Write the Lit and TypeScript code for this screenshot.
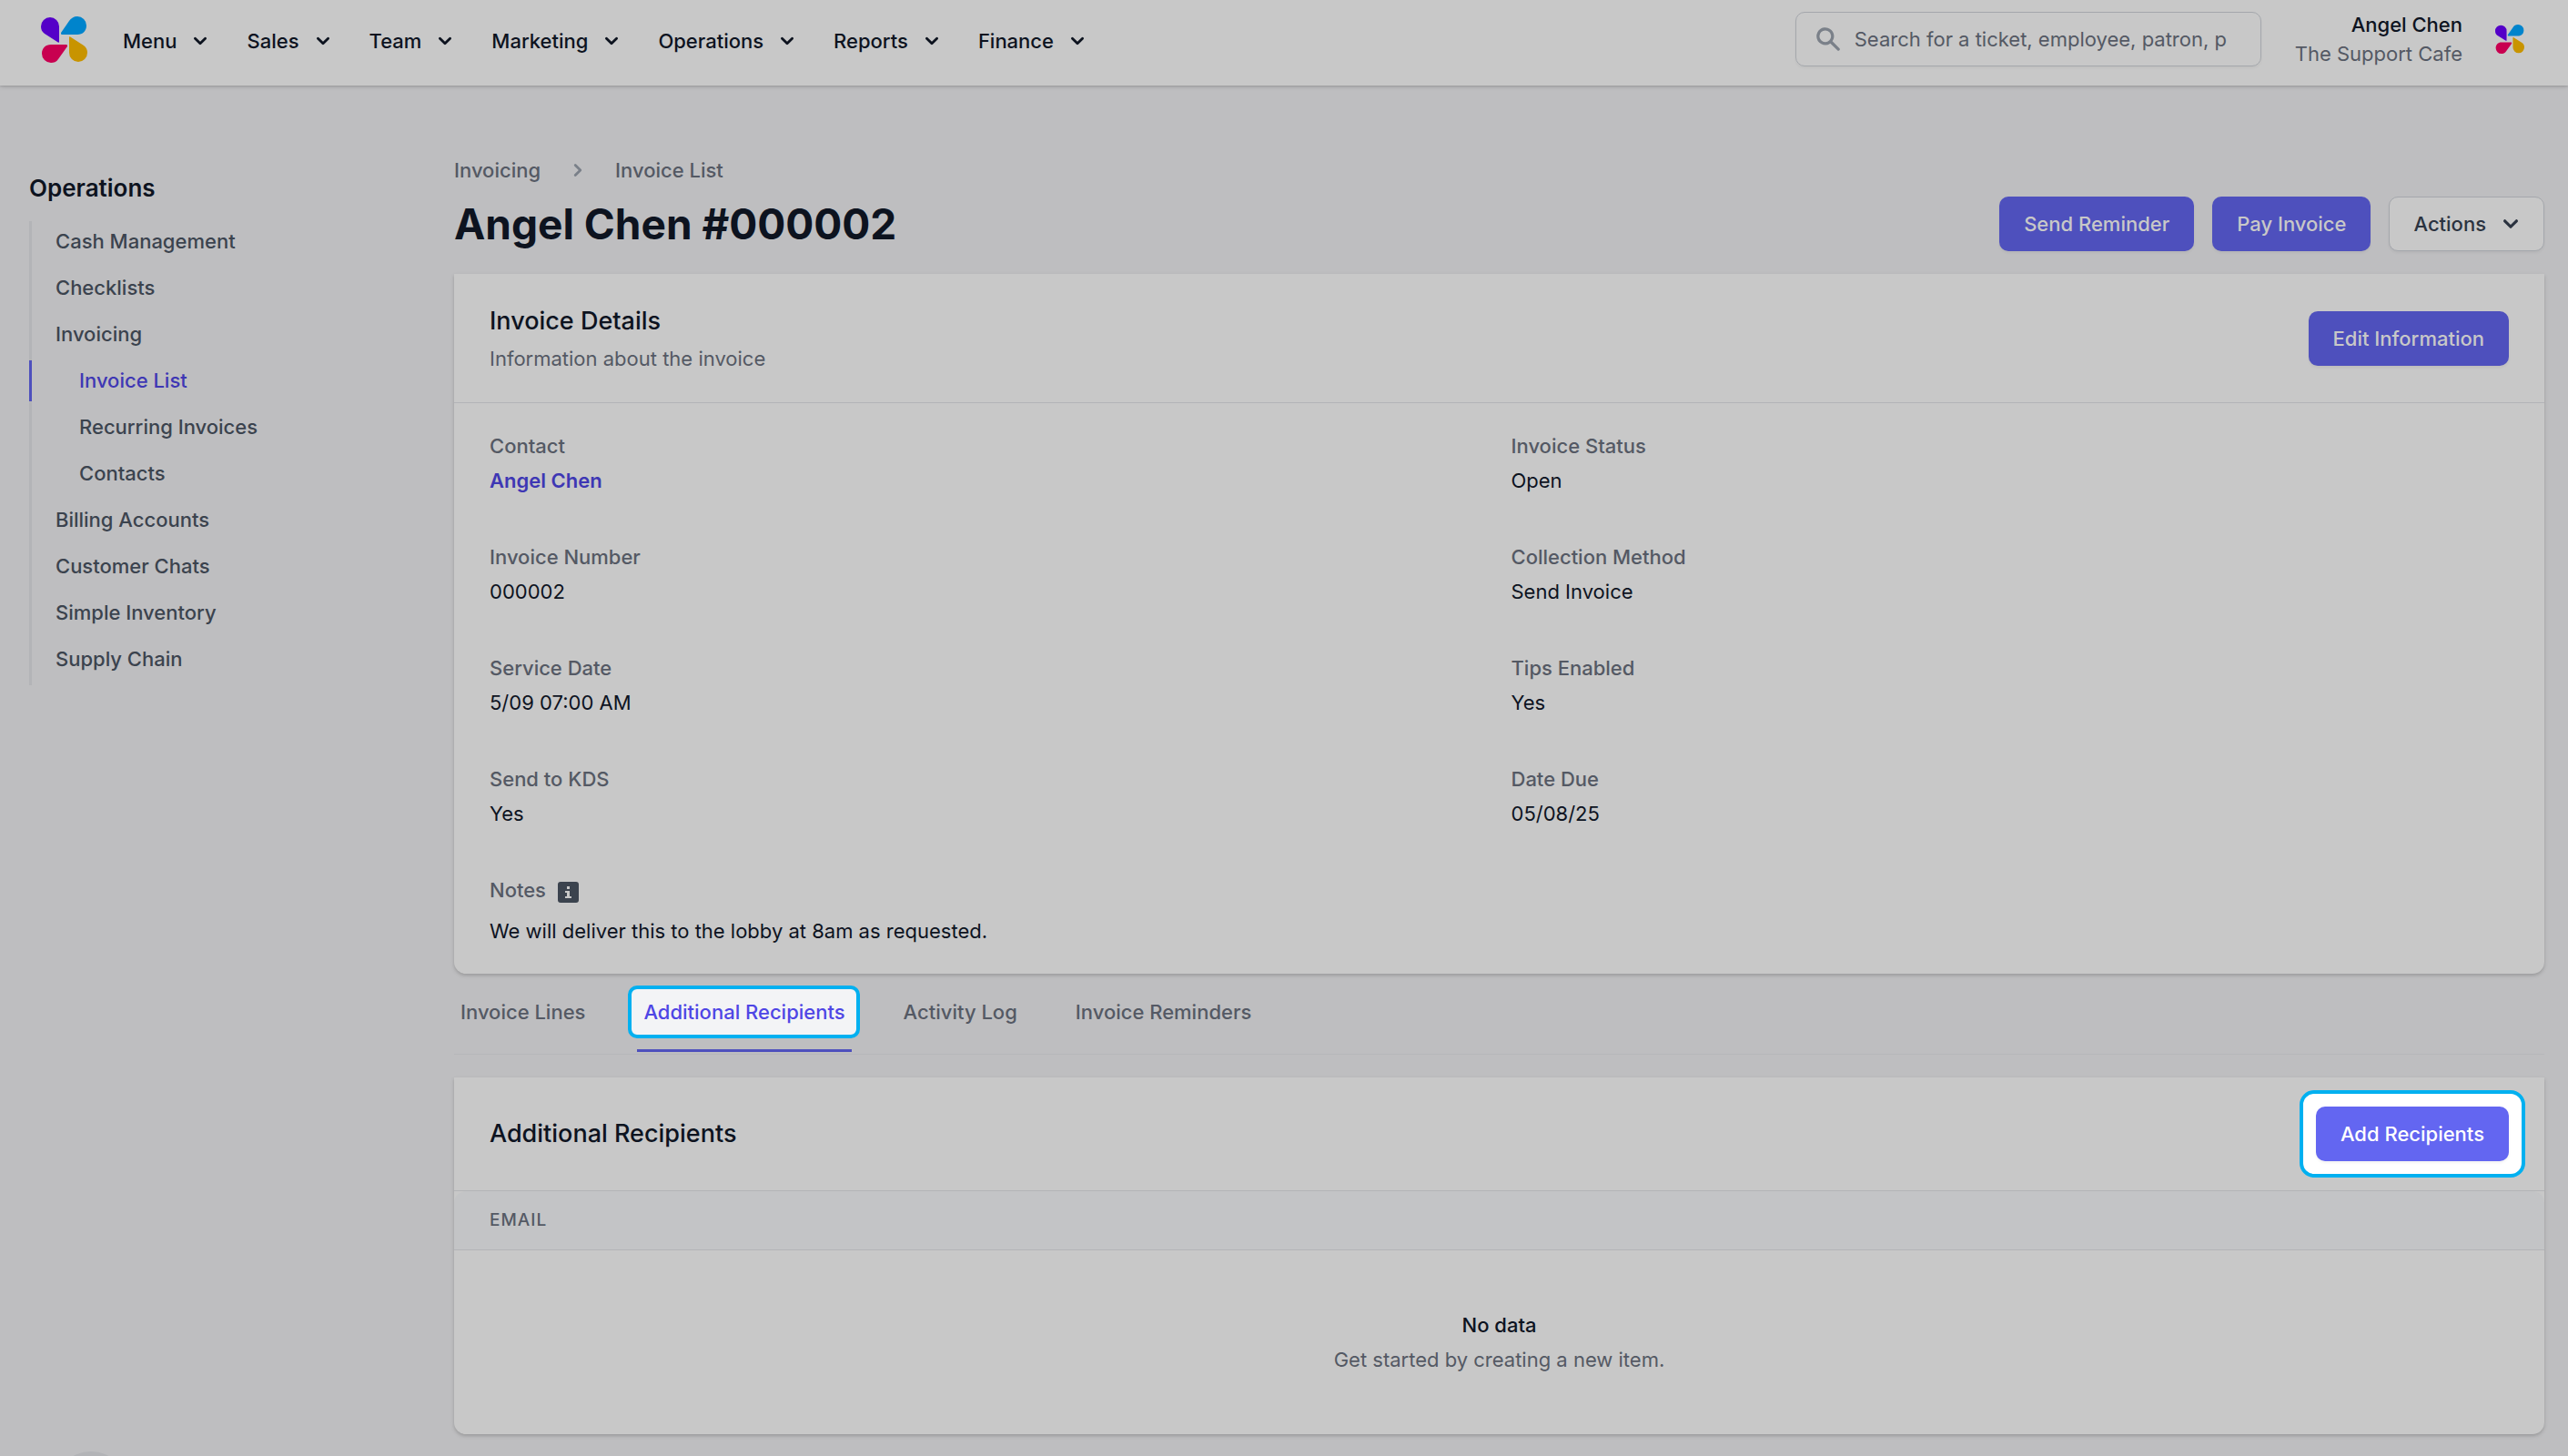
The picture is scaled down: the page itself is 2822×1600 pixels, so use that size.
import { LitElement, html, css, svg } from "lit";
import { customElement } from "lit/decorators.js";
import { classMap } from "lit/directives/class-map.js";

const chevron = (cls: string) => html`<svg class=${cls} viewBox="0 0 20 20" fill="currentColor" aria-hidden="true">
  <path fill-rule="evenodd" d="M5.293 7.293a1 1 0 011.414 0L10 10.586l3.293-3.293a1 1 0 111.414 1.414l-4 4a1 1 0 01-1.414 0l-4-4a1 1 0 010-1.414z" clip-rule="evenodd"/>
</svg>`;

const petals = svg`
  <path fill="#5400c8" d="M10 1A10 10 0 0 1 20 11V28C20 29 19 29 18 28L4 19C1 17 0 14 0 11A10 10 0 0 1 10 1Z"/>
  <path fill="#0084cc" d="M40 0A10 10 0 0 1 50 10C50 16 46 20 40 20H23C22 20 22 19 22 18L31 5C33 2 36 0 40 0Z"/>
  <path fill="#c80050" d="M11 31H28C29 31 29 32 29 33L19 47C17 50 14 51 11 51A10 10 0 0 1 1 41C1 35 5 31 11 31Z"/>
  <path fill="#c89400" d="M31 23C31 22 32 22 33 23L47 32C50 34 51 37 51 40A10 10 0 0 1 31 40Z"/>`;

const NAV = ["Menu", "Sales", "Team", "Marketing", "Operations", "Reports", "Finance"];

const SIDE = [
  { label: "Cash Management" },
  { label: "Checklists" },
  { label: "Invoicing" },
  { label: "Invoice List", sub: true, active: true },
  { label: "Recurring Invoices", sub: true },
  { label: "Contacts", sub: true },
  { label: "Billing Accounts" },
  { label: "Customer Chats" },
  { label: "Simple Inventory" },
  { label: "Supply Chain" },
];

const FIELDS = [
  ["Contact", "Angel Chen"],
  ["Invoice Status", "Open"],
  ["Invoice Number", "000002"],
  ["Collection Method", "Send Invoice"],
  ["Service Date", "5/09 07:00 AM"],
  ["Tips Enabled", "Yes"],
  ["Send to KDS", "Yes"],
  ["Date Due", "05/08/25"],
];

const TABS = ["Invoice Lines", "Additional Recipients", "Activity Log", "Invoice Reminders"];

@customElement("app-root")
export class AppRoot extends LitElement {
  static styles = css`
    :host {
      --surface: #c8c8c8;
      --page: #bebec0;
      --ink: #0d131f;
      --ink-soft: #3b434e;
      --muted: #545964;
      --faint: #7a8089;
      --line: #b3b4b7;
      --accent: #4e50bd;
      --link: #3e37b4;
      --focus: #00b0f0;
      display: block;
      min-height: 100vh;
      background: var(--page);
      color: var(--ink);
      font-family: Inter, "Liberation Sans", sans-serif;
      font-size: 22px;
      line-height: 32px;
    }
    * { box-sizing: border-box; }
    h1, h2, p, dl, dd, ul { margin: 0; padding: 0; }
    ul { list-style: none; }
    a { color: inherit; text-decoration: none; }
    button, input { font: inherit; color: inherit; }
    button { cursor: pointer; }

    .header {
      display: flex;
      align-items: center;
      height: 94px;
      padding: 0 48px 8px 45px;
      background: var(--surface);
      box-shadow: 0 1px 5px rgba(0, 0, 0, 0.16), 0 1px 2px rgba(0, 0, 0, 0.1);
      position: relative;
    }
    .logo { display: block; width: 51px; height: 51px; }
    .logo.small { width: 32px; height: 32px; margin-left: 36px; }
    .nav { display: flex; gap: 37px; margin-left: 39px; flex: 1; padding-top: 4px; }
    .nav-item {
      display: flex;
      align-items: center;
      gap: 12px;
      border: 0;
      padding: 0;
      background: none;
      font-weight: 500;
    }
    .icon-nav { width: 28px; height: 28px; }
    .search {
      display: flex;
      align-items: center;
      gap: 13px;
      width: 512px;
      height: 60px;
      padding: 0 24px 0 19px;
      border: 1px solid #a4a7ac;
      border-radius: 10px;
      box-shadow: 0 2px 3px rgba(0, 0, 0, 0.04);
    }
    .search svg { width: 32px; height: 32px; color: var(--faint); flex: none; }
    .search input {
      flex: 1;
      min-width: 0;
      border: 0;
      padding: 0;
      background: none;
      outline: none;
    }
    .search input::placeholder { color: var(--muted); opacity: 1; }
    .user { text-align: right; margin-left: 37px; font-weight: 500; }
    .user .org { color: var(--muted); font-weight: 400; }

    .body { display: flex; gap: 48px; padding: 77px 26px 23px 32px; }
    .side { width: 419px; flex: none; padding-top: 17px; }
    .side h2 { font-size: 26px; line-height: 38px; font-weight: 600; }
    .side ul { margin-top: 17px; border-left: 3px solid var(--line); }
    .side li { height: 51px; display: flex; }
    .side a {
      flex: 1;
      height: 45px;
      margin-left: -3px;
      padding: 6px 0 0 26px;
      border-left: 3px solid transparent;
      color: var(--ink-soft);
      font-weight: 500;
    }
    .side a.sub { padding-left: 52px; }
    .side a.active { color: var(--link); border-color: var(--accent); }

    .main { flex: 1; min-width: 0; }
    .crumbs { display: flex; align-items: center; gap: 27px; color: var(--muted); font-weight: 500; }
    .crumbs svg { width: 28px; height: 28px; color: var(--faint); }
    .title-row { display: flex; align-items: center; justify-content: space-between; margin-top: 13px; }
    h1 { font-size: 46px; line-height: 58px; font-weight: 700; }
    .actions { display: flex; gap: 20px; }
    .btn {
      display: inline-flex;
      align-items: center;
      gap: 11px;
      height: 60px;
      padding: 0 26px;
      border: 1px solid transparent;
      border-radius: 10px;
      background: var(--accent);
      color: var(--surface);
      font-weight: 500;
      box-shadow: 0 2px 3px rgba(0, 0, 0, 0.05);
    }
    .btn.plain { background: var(--surface); border-color: #a4a7ac; color: #2b3340; padding-right: 20px; }
    .icon-btn { width: 32px; height: 32px; }
    .btn.lit { background: #6366f1; color: #fff; }

    .card {
      background: var(--surface);
      border-radius: 0 0 13px 13px;
      box-shadow: 0 2px 5px rgba(0, 0, 0, 0.12), 0 2px 3px rgba(0, 0, 0, 0.08);
    }
    .details { margin-top: 25px; }
    .card-head {
      display: flex;
      align-items: center;
      justify-content: space-between;
      padding: 31px 39px;
      border-bottom: 1px solid var(--line);
    }
    .card-head h2 { font-size: 27px; line-height: 42px; font-weight: 500; }
    .card-head p { margin-top: 3px; line-height: 34px; color: var(--muted); }
    .fields {
      display: grid;
      grid-template-columns: 1fr 1fr;
      gap: 52px 26px;
      padding: 31px 39px;
    }
    dt { color: var(--muted); font-weight: 500; }
    .fields dd { margin-top: 6px; }
    .fields .link { color: var(--link); font-weight: 600; }
    .notes { grid-column: 1 / -1; }
    .notes dt { display: flex; gap: 13px; }
    .notes dt svg { width: 23px; height: 23px; margin-top: 7px; }
    .fields .notes dd { margin-top: 13px; }

    .tabs { display: flex; gap: 50px; padding: 0 7px; border-bottom: 1px solid #b6b7ba; height: 89px; }
    .tab {
      position: relative;
      border: 0;
      border-bottom: 3px solid transparent;
      background: none;
      height: 86px;
      padding: 0 7px;
      color: var(--muted);
      font-weight: 500;
    }
    .tab:first-child { padding-left: 0; }
    .tab.on { border-color: var(--accent); color: #4f46e5; }
    .tab.on::before {
      content: "";
      position: absolute;
      inset: 13px -9px 12px -10px;
      border: 4px solid var(--focus);
      border-radius: 10px;
      background: #f3f4f6;
    }
    .tab span { position: relative; }

    .recipients { margin-top: 25px; }
    .recipients .card-head { padding: 32px 39px; }
    .spot { position: relative; display: flex; }
    .spot::before {
      content: "";
      position: absolute;
      inset: -18px;
      border: 4px solid var(--focus);
      border-radius: 16px;
      background: #fff;
    }
    .spot .btn { position: relative; }
    table { width: 100%; border-collapse: separate; border-spacing: 0; }
    th {
      height: 65px;
      padding: 0 39px;
      text-align: left;
      background: #c3c4c6;
      border-bottom: 1px solid var(--line);
      border-radius: 13px 13px 0 0;
      color: var(--muted);
      font-size: 19px;
      line-height: 26px;
      font-weight: 500;
      letter-spacing: 1px;
    }
    td { padding: 66px 39px; text-align: center; }
    td strong { display: block; font-weight: 500; }
    td p { margin-top: 6px; color: var(--muted); }

    .bubble {
      position: fixed;
      left: 58px;
      bottom: -79px;
      width: 84px;
      height: 84px;
      border: 0;
      border-radius: 50%;
      background: #b3b4b7;
    }
  `;

  private field([label, value]: string[]) {
    return html`<div>
      <dt>${label}</dt>
      <dd>${label === "Contact" ? html`<a class="link" href="#">${value}</a>` : value}</dd>
    </div>`;
  }

  render() {
    return html`
      <header class="header">
        <svg class="logo" viewBox="0 0 51 51" aria-hidden="true">${petals}</svg>
        <nav class="nav">
          ${NAV.map((n) => html`<button class="nav-item" type="button">${n}${chevron("icon-nav")}</button>`)}
        </nav>
        <div class="search">
          <svg viewBox="0 0 20 20" fill="currentColor" aria-hidden="true">
            <path fill-rule="evenodd" d="M8 4a4 4 0 100 8 4 4 0 000-8zM2 8a6 6 0 1110.89 3.476l4.817 4.817a1 1 0 01-1.414 1.414l-4.816-4.816A6 6 0 012 8z" clip-rule="evenodd"/>
          </svg>
          <input type="text" aria-label="Search" placeholder="Search for a ticket, employee, patron, p" />
        </div>
        <div class="user">
          <div>Angel Chen</div>
          <div class="org">The Support Cafe</div>
        </div>
        <svg class="logo small" viewBox="0 0 51 51" aria-hidden="true">${petals}</svg>
      </header>

      <div class="body">
        <aside class="side">
          <h2>Operations</h2>
          <ul>
            ${SIDE.map(
              (s) => html`<li>
                <a href="#" class=${classMap({ sub: !!s.sub, active: !!s.active })}>${s.label}</a>
              </li>`
            )}
          </ul>
        </aside>

        <main class="main">
          <nav class="crumbs">
            <a href="#">Invoicing</a>
            <svg viewBox="0 0 20 20" fill="currentColor" aria-hidden="true">
              <path fill-rule="evenodd" d="M7.293 14.707a1 1 0 010-1.414L10.586 10 7.293 6.707a1 1 0 011.414-1.414l4 4a1 1 0 010 1.414l-4 4a1 1 0 01-1.414 0z" clip-rule="evenodd"/>
            </svg>
            <a href="#">Invoice List</a>
          </nav>
          <div class="title-row">
            <h1>Angel Chen #000002</h1>
            <div class="actions">
              <button class="btn" type="button">Send Reminder</button>
              <button class="btn" type="button">Pay Invoice</button>
              <button class="btn plain" type="button">Actions${chevron("icon-btn")}</button>
            </div>
          </div>

          <section class="card details">
            <div class="card-head">
              <div>
                <h2>Invoice Details</h2>
                <p>Information about the invoice</p>
              </div>
              <button class="btn" type="button">Edit Information</button>
            </div>
            <dl class="fields">
              ${FIELDS.map((f) => this.field(f))}
              <div class="notes">
                <dt>
                  Notes
                  <svg viewBox="0 0 23 23" aria-hidden="true">
                    <rect width="23" height="23" rx="3" fill="#3b434e"/>
                    <path fill="#c8c8c8" d="M10 5h3v3h-3zM8 10h5v6h2v2H8v-2h2v-4H8z"/>
                  </svg>
                </dt>
                <dd>We will deliver this to the lobby at 8am as requested.</dd>
              </div>
            </dl>
          </section>

          <div class="tabs" role="tablist">
            ${TABS.map(
              (t, i) => html`<button class=${classMap({ tab: true, on: i === 1 })} type="button" role="tab" aria-selected=${i === 1}>
                <span>${t}</span>
              </button>`
            )}
          </div>

          <section class="card recipients">
            <div class="card-head">
              <h2>Additional Recipients</h2>
              <div class="spot"><button class="btn lit" type="button">Add Recipients</button></div>
            </div>
            <table>
              <thead><tr><th scope="col">EMAIL</th></tr></thead>
              <tbody>
                <tr>
                  <td>
                    <strong>No data</strong>
                    <p>Get started by creating a new item.</p>
                  </td>
                </tr>
              </tbody>
            </table>
          </section>
        </main>
      </div>
      <button class="bubble" type="button" aria-label="Chat"></button>
    `;
  }
}
